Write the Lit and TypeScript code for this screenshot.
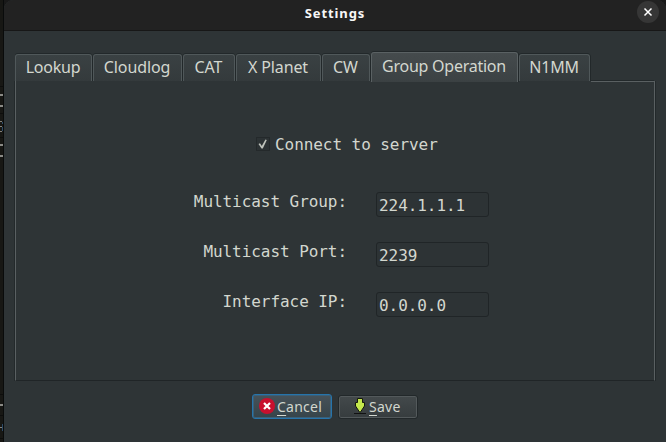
import { LitElement, html, css, svg } from "lit";
import { customElement } from "lit/decorators.js";
import { classMap } from "lit/directives/class-map.js";
import { styleMap } from "lit/directives/style-map.js";

interface Tab {
  label: string;
  width: number;
  spacing: number;
  active?: boolean;
}

const TABS: Tab[] = [
  { label: "Lookup", width: 77, spacing: -0.25 },
  { label: "Cloudlog", width: 89, spacing: -0.12 },
  { label: "CAT", width: 52, spacing: -0.1 },
  { label: "X Planet", width: 85, spacing: -0.12 },
  { label: "CW", width: 48, spacing: -0.1 },
  { label: "Group Operation", width: 147, spacing: -0.25, active: true },
  { label: "N1MM", width: 71, spacing: -0.25 },
];

const FIELDS = [
  { label: "Multicast Group:", value: "224.1.1.1" },
  { label: "Multicast Port:", value: "2239" },
  { label: "Interface IP:", value: "0.0.0.0" },
];

@customElement("app-root")
export class AppRoot extends LitElement {
  static styles = css`
    :host {
      display: flex;
      width: 666px;
      height: 442px;
      overflow: hidden;
      background: #191919;
      color: #d3d7cf;
      font-family: "Noto Sans", sans-serif;
      font-size: 16px;
    }
    * { box-sizing: border-box; }
    .behind {
      flex: none;
      width: 4px;
      height: 442px;
      display: block;
    }
    .window {
      flex: 1;
      display: flex;
      flex-direction: column;
      background: #2e3436;
      border-radius: 9px 9px 0 0;
      overflow: hidden;
    }
    .title {
      flex: none;
      height: 31px;
      display: grid;
      grid-template-columns: 32px 1fr 32px;
      background: #222;
      border-bottom: 1px solid #171717;
      color: #f7f7f7;
      font-size: 13px;
      font-weight: 700;
      line-height: 26px;
      text-align: center;
      letter-spacing: 0.9px;
    }
    .title span { grid-column: 2; }
    .close {
      width: 22px;
      height: 22px;
      margin: 1px 0 0 3px;
      border-radius: 50%;
      background: #363636;
    }
    .close svg { display: block; }
    .tabs {
      flex: none;
      display: flex;
      align-items: flex-end;
      gap: 1px;
      height: 50px;
      padding-left: 11px;
    }
    .tab {
      height: 27px;
      padding-right: 1px;
      border: 1px solid #50585a;
      border-bottom: 0;
      border-radius: 3px 3px 0 0;
      box-shadow: 0 -1px 0 #22282a, 1px 0 0 #22282a;
      background: linear-gradient(#3a4143, #343a3c);
      text-align: center;
      line-height: 25px;
      white-space: nowrap;
    }
    .tab.active {
      height: 30px;
      margin-bottom: -1px;
      background: linear-gradient(#454b4d, #3b4143);
      border-color: #5a6163;
      line-height: 26px;
    }
    .panel {
      flex: none;
      width: 640px;
      height: 300px;
      margin-left: 11px;
      border: 1px solid #5a6062;
      border-top: 0;
      border-bottom-color: #202527;
      box-shadow: -1px 0 0 #23292b, 1px 0 0 #23292b;
      display: flex;
      flex-direction: column;
      font-family: "DejaVu Sans Mono", "Liberation Mono", monospace;
      letter-spacing: -0.06px;
    }
    .edge {
      flex: none;
      height: 1px;
      margin-left: 575px;
      background: #5a6062;
      box-shadow: 0 -1px 0 #23292b;
    }
    .check {
      display: flex;
      align-items: center;
      gap: 5px;
      margin: 52px 0 0 240px;
      height: 22px;
      line-height: 22px;
    }
    .box {
      width: 14px;
      height: 14px;
      margin-top: -3px;
      border: 1px solid #24292b;
      background: #2c3234;
    }
    .box svg { display: block; }
    .fields {
      display: grid;
      grid-template-columns: 331px 113px;
      grid-auto-rows: 26px;
      column-gap: 29px;
      row-gap: 24px;
      margin-top: 36px;
    }
    .label {
      text-align: right;
      line-height: 20px;
    }
    .input {
      height: 25px;
      border: 1px solid #202527;
      border-radius: 3px;
      background: #2d3335;
      padding-left: 2px;
      line-height: 26px;
      white-space: nowrap;
    }
    .actions {
      display: flex;
      align-items: flex-end;
      gap: 6px;
      margin: 13px 0 0 248px;
    }
    .button {
      display: flex;
      width: 80px;
      height: 24px;
      align-items: center;
      border: 1px solid #22282a;
      border-radius: 3px;
      background: linear-gradient(#43494b, #363c3e);
      box-shadow: inset 0 0 0 1px #53595b;
      font-size: 14px;
      line-height: 24px;
      letter-spacing: 0.25px;
    }
    .button.focus {
      height: 25px;
      border-color: #2674ab;
      background: linear-gradient(#475259, #36444a);
      box-shadow: inset 0 0 0 1px #3b5f77;
    }
    .button svg { flex: none; }
    .cancel-icon { margin: -1px 2px 0 6px; }
    .save-icon { margin: -2px 2px 0 14px; }
    .key {
      text-decoration: underline;
      text-decoration-thickness: 1px;
      text-underline-offset: 3px;
    }
  `;

  private strip() {
    return svg`
      <rect width="4" height="442" fill="#171714"></rect>
      <path d="M0 86.5H4M0 113.5H4M0 137.5H4M0 394.5H4M0 415.5H4M0 438.5H4" stroke="#0d0d0c"></path>
      <path d="M0 95H3M0 106H3M0 145H3M0 156H3M0 405H3" stroke="#8a8a86" stroke-width="2"></path>
      <path d="M0 121.5H2M0 126.5H2M0 131.5H2M0 427.5H2" stroke="#85827b"></path>
      <path d="M2.5 122V124M2.5 127V131M2.5 424V431" stroke="#2d4b68"></path>
      <rect x="3" width="1" height="442" fill="#090b0b"></rect>`;
  }

  render() {
    return html`
      <svg class="behind" viewBox="0 0 4 442">${this.strip()}</svg>
      <main class="window">
        <header class="title">
          <span>Settings</span>
          <div class="close">
            <svg width="22" height="22" viewBox="0 0 22 22">
              <path d="M7.5 7.5l7 7M14.5 7.5l-7 7" stroke="#fff" stroke-width="1.5"></path>
            </svg>
          </div>
        </header>
        <nav class="tabs">
          ${TABS.map(
            (t) => html`<div
              class=${classMap({ tab: true, active: !!t.active })}
              style=${styleMap({ width: `${t.width}px`, letterSpacing: `${t.spacing}px` })}
            >${t.label}</div>`
          )}
        </nav>
        <section class="panel">
          <div class="edge"></div>
          <div class="check">
            <div class="box">
              <svg width="12" height="12" viewBox="0 0 12 12">
                <path d="M1.5 6l1.5-.8 1.8 2.8L8.4 1.6l1.4.5L5.8 10.4H4.5z" fill="#bfc3bc"></path>
              </svg>
            </div>
            <span>Connect to server</span>
          </div>
          <div class="fields">
            ${FIELDS.map(
              (f) => html`<div class="label">${f.label}</div>
                <div class="input">${f.value}</div>`
            )}
          </div>
        </section>
        <footer class="actions">
          <div class="button focus">
            <svg class="cancel-icon" width="16" height="16" viewBox="0 0 16 16">
              <circle cx="8" cy="8" r="8" fill="#c8102e"></circle>
              <path d="M5 5l6 6M11 5l-6 6" stroke="#fff" stroke-width="2.2"></path>
            </svg>
            <span><span class="key">C</span>ancel</span>
          </div>
          <div class="button">
            <svg class="save-icon" width="14" height="16" viewBox="0 0 14 16">
              <path d="M1 15.5H13" stroke="#111"></path>
              <path d="M4.5.5h5v4h2v3.500L7.500 14h-1L2.500 8v-3.500h2z" fill="#c5e84d" stroke="#14180c"></path>
            </svg>
            <span><span class="key">S</span>ave</span>
          </div>
        </footer>
      </main>
    `;
  }
}
